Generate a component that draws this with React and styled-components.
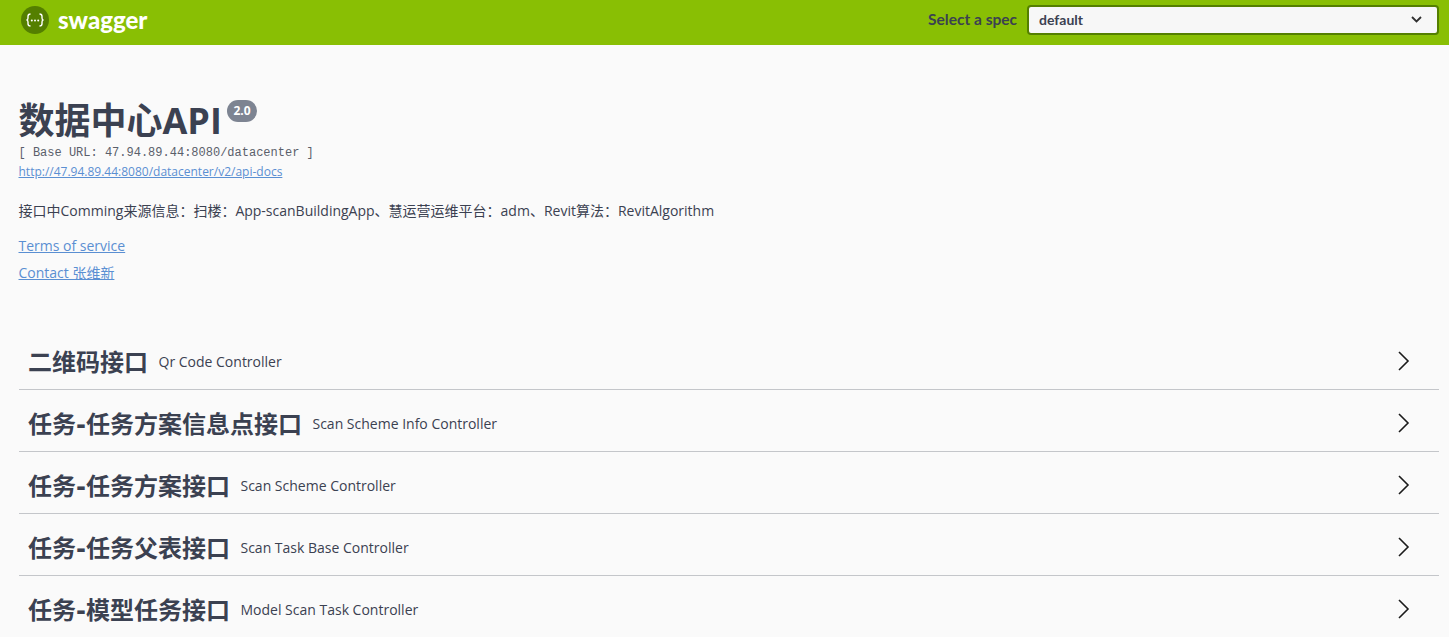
import React from "react";
import styled, { createGlobalStyle } from "styled-components";

const cjk = '"Noto Sans CJK SC"';

const GlobalStyle = createGlobalStyle`
  html, body {
    margin: 0;
    padding: 0;
    background: #fafafa;
    overflow: hidden;
  }
  body {
    font-family: "Open Sans", ${cjk}, sans-serif;
    color: #3b4151;
  }
`;

const Page = styled.div`
  height: 637px;
  overflow: hidden;
`;

const Topbar = styled.header`
  display: flex;
  align-items: center;
  justify-content: space-between;
  height: 45px;
  padding: 0 10px 6px 21px;
  box-sizing: border-box;
  background: #89bf04;
`;

const Brand = styled.div`
  display: flex;
  align-items: center;
  gap: 9px;
`;

const BrandName = styled.span`
  font-family: Lato, sans-serif;
  font-size: 24px;
  font-weight: 900;
  color: #fff;
`;

const SpecPicker = styled.label`
  display: flex;
  align-items: center;
  gap: 10px;
`;

const SpecLabel = styled.span`
  margin-bottom: 2px;
  font-family: Lato, sans-serif;
  font-size: 15.5px;
  font-weight: 700;
  color: #3b4151;
`;

const SpecSelect = styled.div`
  display: flex;
  align-items: center;
  justify-content: space-between;
  width: 412px;
  height: 30px;
  box-sizing: border-box;
  padding: 0 15px 1px 10px;
  background: #f7f7f7;
  border: 2px solid #547f00;
  border-radius: 4px;
  font-family: Lato, sans-serif;
  font-size: 14px;
  font-weight: 700;
`;

const Info = styled.section`
  padding: 53px 10px 0 18.5px;
`;

const TitleRow = styled.div`
  display: flex;
  align-items: flex-start;
  height: 48px;
`;

const Title = styled.h1`
  margin: 0;
  font-size: 36px;
  line-height: 46px;
  font-weight: 700;
  color: #3b4151;
`;

const Version = styled.span`
  margin: 2px 0 0 5.5px;
  padding: 0 6px;
  height: 22px;
  line-height: 22px;
  border-radius: 11px;
  background: #7d8492;
  color: #fff;
  font-size: 12px;
  font-weight: 700;
`;

const BaseUrl = styled.pre`
  margin: 0;
  font-family: "Liberation Mono", monospace;
  font-size: 12px;
  line-height: 15px;
  color: #5a5f6b;
`;

const Link = styled.a`
  display: block;
  width: fit-content;
  color: #5a8fd2;
  text-decoration: underline;
  font-size: ${(p) => p.$size}px;
  line-height: ${(p) => p.$line}px;
  margin-top: ${(p) => p.$top}px;
`;

const Description = styled.p`
  margin: 21px 0 0;
  font-size: 14px;
  line-height: 20px;
  color: #3b4151;
`;

const Tags = styled.div`
  margin: 45px 10px 0 19px;
`;

const TagRow = styled.div`
  display: flex;
  align-items: center;
  height: 62px;
  box-sizing: border-box;
  padding: 4px 26px 0 9px;
  border-bottom: 1px solid #c4c6ca;
`;

const TagName = styled.h4`
  margin: 0;
  font-family: "DejaVu Sans", ${cjk}, sans-serif;
  font-size: 24px;
  font-weight: 700;
  color: #3b4151;
`;

const TagDescription = styled.small`
  flex: 1;
  margin: 2px 0 0 10.5px;
  font-size: 14px;
  color: #3b4151;
`;

const tags = [
  ["二维码接口", "Qr Code Controller"],
  ["任务-任务方案信息点接口", "Scan Scheme Info Controller"],
  ["任务-任务方案接口", "Scan Scheme Controller"],
  ["任务-任务父表接口", "Scan Task Base Controller"],
  ["任务-模型任务接口", "Model Scan Task Controller"],
];

const Logo = () => (
  <svg width="28" height="28" viewBox="0 0 28 28">
    <circle cx="14" cy="14" r="14" fill="#547f00" />
    <path
      d="M9.500 8c-2 0-2.500 1-2.500 2.300v1.700c0 1-.5 1.900-1.500 2 1 .1 1.500 1 1.500 2v1.700c0 1.300.5 2.300 2.500 2.300M18.500 8c2 0 2.500 1 2.500 2.300v1.700c0 1 .5 1.900 1.500 2-1 .1-1.500 1-1.500 2v1.700c0 1.300-.5 2.300-2.500 2.300"
      fill="none"
      stroke="#fff"
      strokeWidth="1.400"
    />
    <circle cx="10.800" cy="14.500" r="1" fill="#fff" />
    <circle cx="14" cy="14.500" r="1" fill="#fff" />
    <circle cx="17.200" cy="14.500" r="1" fill="#fff" />
  </svg>
);

const Chevron = () => (
  <svg width="20" height="20" viewBox="0 0 20 20">
    <path d="M6 1l9 9-9 9" fill="none" stroke="#1b1b1b" strokeWidth="1.600" />
  </svg>
);

const SmallChevron = () => (
  <svg width="11" height="7" viewBox="0 0 11 7">
    <path d="M1 1l4.500 4.500L10 1" fill="none" stroke="#303030" strokeWidth="1.800" />
  </svg>
);

export default function App() {
  return (
    <Page>
      <GlobalStyle />
      <Topbar>
        <Brand>
          <Logo />
          <BrandName>swagger</BrandName>
        </Brand>
        <SpecPicker>
          <SpecLabel>Select a spec</SpecLabel>
          <SpecSelect>
            default
            <SmallChevron />
          </SpecSelect>
        </SpecPicker>
      </Topbar>
      <Info>
        <TitleRow>
          <Title>数据中心API</Title>
          <Version>2.0</Version>
        </TitleRow>
        <BaseUrl>[ Base URL: 47.94.89.44:8080/datacenter ]</BaseUrl>
        <Link $size={12} $line={16} $top={3}>
          http://47.94.89.44:8080/datacenter/v2/api-docs
        </Link>
        <Description>接口中Comming来源信息：扫楼：App-scanBuildingApp、慧运营运维平台：adm、Revit算法：RevitAlgorithm</Description>
        <Link $size={14} $line={20} $top={15}>
          Terms of service
        </Link>
        <Link $size={14} $line={20} $top={7}>
          Contact 张维新
        </Link>
      </Info>
      <Tags>
        {tags.map(([name, description]) => (
          <TagRow key={name}>
            <TagName>{name}</TagName>
            <TagDescription>{description}</TagDescription>
            <Chevron />
          </TagRow>
        ))}
      </Tags>
    </Page>
  );
}
